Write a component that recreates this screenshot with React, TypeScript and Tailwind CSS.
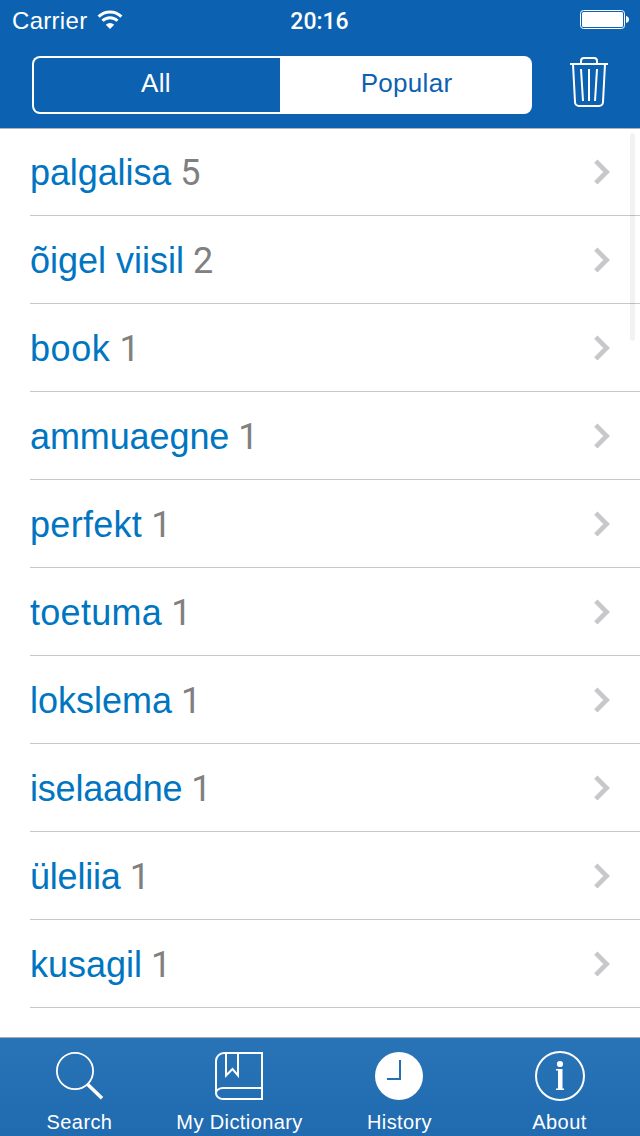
import React from 'react';
import { clsx } from 'clsx';

interface Entry {
  word: string;
  count: number;
  tracking?: string;
}

const entries: Entry[] = [
  { word: 'palgalisa', count: 5, tracking: 'tracking-[-0.1px]' },
  { word: 'õigel viisil', count: 2 },
  { word: 'book', count: 1, tracking: 'tracking-[0.6px]' },
  { word: 'ammuaegne', count: 1, tracking: 'tracking-[-0.1px]' },
  { word: 'perfekt', count: 1, tracking: 'tracking-[0.3px]' },
  { word: 'toetuma', count: 1, tracking: 'tracking-[0.3px]' },
  { word: 'lokslema', count: 1 },
  { word: 'iselaadne', count: 1, tracking: 'tracking-[-0.2px]' },
  { word: 'üleliia', count: 1, tracking: 'tracking-[-0.2px]' },
  { word: 'kusagil', count: 1 },
];

const WifiIcon = () => (
  <svg width="26" height="20" viewBox="0 0 26 20" fill="none" stroke="white" aria-hidden="true">
    <path d="M1.6 6.6a16.2 16.2 0 0 1 22.8 0" strokeWidth="3" />
    <path d="M5.5 10.800a10.6 10.6 0 0 1 15 0" strokeWidth="3" />
    <path d="M13 19 8.800 14.700a6 6 0 0 1 8.400 0Z" fill="white" stroke="none" />
  </svg>
);

const BatteryIcon = () => (
  <svg width="50" height="20" viewBox="0 0 50 20" fill="none" aria-hidden="true">
    <rect x="0.5" y="0.5" width="44" height="18" rx="3" stroke="white" />
    <rect x="2" y="2" width="41" height="15" rx="1.5" fill="white" />
    <path d="M46 6c2 .4 3 1.700 3 3.500s-1 3.100-3 3.500Z" fill="white" />
  </svg>
);

const TrashIcon = () => (
  <svg width="38" height="52" viewBox="0 0 38 52" fill="none" stroke="white" strokeWidth="2" aria-hidden="true">
    <path d="M0 8h38" />
    <path d="M11 8V5a3 3 0 0 1 3-3h10a3 3 0 0 1 3 3v3" />
    <path d="M3 8l2 38a4 4 0 0 0 4 4h20a4 4 0 0 0 4-4l2-38" />
    <path d="M11 13l2 32M19 13v32M27 13l-2 32" />
  </svg>
);

const SearchIcon = () => (
  <svg width="50" height="50" viewBox="0 0 50 50" fill="none" stroke="white" aria-hidden="true">
    <circle cx="20" cy="20" r="18.100" strokeWidth="1.800" />
    <path d="M32.500 33.200l14.500 14" strokeWidth="3.600" />
  </svg>
);

const BookIcon = () => (
  <svg width="50" height="50" viewBox="0 0 50 50" fill="none" stroke="white" strokeWidth="2" aria-hidden="true">
    <path d="M1 43V10a8 8 0 0 1 8-8h38v46H8a7 6 0 0 1-7-6a7 5 0 0 1 7-5h39" />
    <path d="M11 2v22.500l6.500-6.500L23 24.500V2" />
  </svg>
);

const ClockIcon = () => (
  <svg width="50" height="50" viewBox="0 0 50 50" fill="none" aria-hidden="true">
    <circle cx="24" cy="25" r="24" fill="white" />
    <path d="M25 9v19H12" stroke="#246eb3" strokeWidth="2" />
  </svg>
);

const InfoIcon = () => (
  <svg width="50" height="50" viewBox="0 0 50 50" fill="none" aria-hidden="true">
    <circle cx="25" cy="25" r="24" stroke="white" strokeWidth="2" />
    <circle cx="25" cy="13" r="3.100" fill="white" />
    <path d="M21 18h6.500v19.500H29V39h-8v-1.500h2V19.500h-2Z" fill="white" />
  </svg>
);

const Chevron = () => (
  <svg width="18" height="26" viewBox="0 0 18 26" fill="none" aria-hidden="true">
    <path d="M2.800 2.200 13.600 13 2.800 23.800" stroke="#c7c7cc" strokeWidth="4.700" />
  </svg>
);

const tabs: Array<{ label: string; icon: React.ReactNode }> = [
  { label: 'Search', icon: <SearchIcon /> },
  { label: 'My Dictionary', icon: <BookIcon /> },
  { label: 'History', icon: <ClockIcon /> },
  { label: 'About', icon: <InfoIcon /> },
];

const StatusBar = () => (
  <div className="grid h-10 grid-cols-3 items-center pl-3 pr-[10px] text-white">
    <div className="flex items-center gap-[10px]">
      <span className="pt-0.5 text-[24px] leading-7 tracking-[0.3px]">Carrier</span>
      <WifiIcon />
    </div>
    <span className="pr-[3px] pt-[3px] text-center font-[Roboto,sans-serif] text-[23px] font-medium leading-7">
      20:16
    </span>
    <div className="flex justify-end">
      <BatteryIcon />
    </div>
  </div>
);

const Header = () => (
  <header className="h-[129px] shrink-0 border-b border-[#b2b2b2] bg-[#0c61b1]">
    <StatusBar />
    <div className="flex items-start px-8 pt-4">
      <div className="flex h-[58px] w-[500px] rounded-lg bg-white p-0.5 text-[26px] leading-[50px] tracking-[0.3px]">
        <button className="w-[246px] rounded-l-md bg-[#0c61b1] pb-1 pr-0.5 text-white">All</button>
        <button className="flex-1 pb-1 pl-[3px] text-[#0c61b1]">Popular</button>
      </div>
      <button className="ml-auto" aria-label="Clear history">
        <TrashIcon />
      </button>
    </div>
  </header>
);

const Row = ({ word, count, tracking, first }: Entry & { first: boolean }) => (
  <li className={clsx('pl-[30px]', first ? 'h-[87px]' : 'h-[88px]')}>
    <div className="flex h-full items-center justify-between border-b border-[#c8c7cc] pr-[29px]">
      <span className="whitespace-pre pt-0.5 text-[36px] leading-10 text-[#0075c1]">
        <span className={tracking}>{word}</span>
        <span className="ml-[9px] font-[Roboto,sans-serif] text-[#808080]">{count}</span>
      </span>
      <Chevron />
    </div>
  </li>
);

const TabBar = () => (
  <nav className="grid h-[99px] shrink-0 grid-cols-4 border-t border-[#a9adb0] bg-linear-to-b from-[#2973b7] to-[#206aaf] text-white">
    {tabs.map((tab) => (
      <button key={tab.label} className="flex flex-col items-center pt-[13px]">
        {tab.icon}
        <span className="mt-[9px] whitespace-nowrap pr-px text-[20px] leading-6 tracking-[0.4px]">{tab.label}</span>
      </button>
    ))}
  </nav>
);

export default function App() {
  return (
    <div className="flex h-[1136px] w-[640px] flex-col overflow-hidden bg-white font-['Liberation_Sans',Arial,sans-serif]">
      <Header />
      <main className="relative flex-1 overflow-hidden">
        <ul>
          {entries.map((entry, i) => (
            <Row key={entry.word} {...entry} first={i === 0} />
          ))}
        </ul>
        {/* scroll indicator over the list */}
        <div className="absolute right-[5px] top-1 h-[208px] w-[5px] rounded-full bg-black/5" />
      </main>
      <TabBar />
    </div>
  );
}
